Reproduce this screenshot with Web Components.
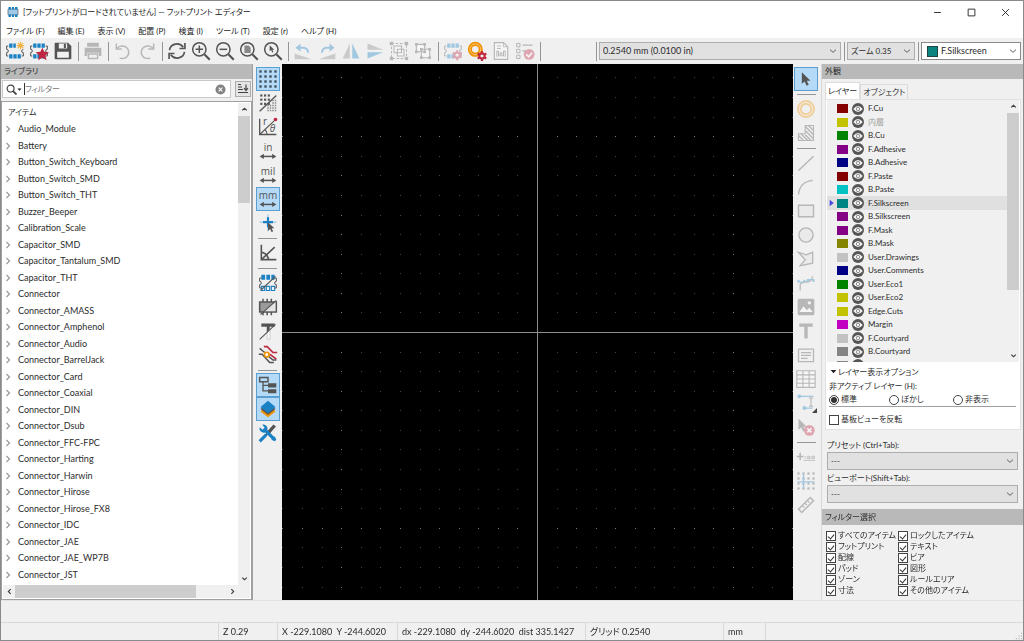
<!DOCTYPE html>
<html lang="ja">
<head>
<meta charset="utf-8">
<title>フットプリント エディター</title>
<style>
html,body{margin:0;height:100%}
body{font:9px/12px Lato,"Noto Sans CJK JP",sans-serif;font-feature-settings:"palt";color:#2c2c2c;background:#f0f0f0;overflow:hidden}
</style>
</head>
<body>
<fp-app></fp-app>
<script>
const G='#545454', B='#1a81c4', R='#bf2641', O='#f29100';
const chip=(top,bot)=>`<g fill="${top}"><path d="M5 3h4v5H5zM10 3h4v5h-4zM15 3h4v5h-4z"/></g><g fill="${bot}"><path d="M5 16h4v5H5zM10 16h4v5h-4zM15 16h4v5h-4z"/></g>`;
const fpBody=`<path d="M4 6H2v4a2 2 0 0 1 0 4v4h2M20 6h2v4a2 2 0 0 0 0 4v4h-2" fill="none" stroke="${G}" stroke-width="1.2"/>`;
const gear=(x,y,c)=>`<g transform="translate(${x} ${y})"><circle r="3.2" fill="#f0f0f0" stroke="${c}" stroke-width="2.6"/><path d="M0-6V-4M0 6V4M-5.2-3L-3.5-2M5.2 3L3.5 2M-5.2 3L-3.5 2M5.2-3L3.5-2" stroke="${c}" stroke-width="2.6"/></g>`;
const mag=inner=>`<circle cx="10" cy="10" r="8" fill="none" stroke="${G}" stroke-width="1.8"/><path d="M16 16l6.500 6.500" stroke="${G}" stroke-width="2.600"/>${inner}`;
const cursor=(x,y,s=1)=>`<path transform="translate(${x} ${y}) scale(${s})" d="M0 0V12L3 9.500 5 14 7.200 13 5.200 8.700H9z" fill="${G}"/>`;
const dots=(xs,ys,r,c)=>xs.map(x=>ys.map(y=>`<rect x="${x-r}" y="${y-r}" width="${2*r}" height="${2*r}" fill="${c}"/>`).join('')).join('');
const arrowsH=`<path d="M5 18.500H19" stroke="${G}" stroke-width="1.800"/><path d="M2 18.500l5-3.200v6.400zM22 18.500l-5-3.200v6.400z" fill="${G}"/>`;
const unit=t=>`<text x="12" y="12" text-anchor="middle" font-size="12" font-family="Open Sans" fill="${G}">${t}</text>${arrowsH}`;
const ICONS={
app:`<rect x="2" y="6" width="20" height="12" rx="1" fill="#9cc9e8" stroke="#666" stroke-width="1.5"/><g fill="${B}"><path d="M3 2h5v5H3zM10 2h4v5h-4zM16 2h5v5h-5zM3 17h5v5H3zM10 17h4v5h-4zM16 17h5v5h-5z"/></g>`,
newfp:chip(B,B)+fpBody+`<rect x="13" y="0" width="11" height="10" fill="#f0f0f0"/><path d="M18.500 1v9M14 5.500h9M15.300 2.300l6.400 6.400M21.700 2.300l-6.400 6.400" stroke="#f2b13c" stroke-width="1.300"/>`,
starfp:chip(B,B)+fpBody+`<path d="M16 8l2.400 5 5.600.6-4.200 3.800 1.200 5.600-5-2.900-5 2.900 1.200-5.600-4.200-3.800 5.600-.6z" fill="${R}"/>`,
save:`<path d="M2 3a1 1 0 0 1 1-1H18l4 4V21a1 1 0 0 1-1 1H3a1 1 0 0 1-1-1z" fill="${G}"/><path d="M7 3H17V9H7zM5 13H19V20H5z" fill="#f0f0f0"/><path d="M13 3.500h2.500v5H13z" fill="${G}"/>`,
print:`<path d="M2 8H22V18H19V14H5V18H2zM5 2H19V7H5z" fill="${G}"/><path d="M6.500 15.500H17.500V21H6.500z" fill="none" stroke="${G}" stroke-width="1.800"/>`,
undo:`<path d="M4 3V9.500H10.500" fill="none" stroke="${G}" stroke-width="1.800"/><path d="M4.500 9A8 7.500 0 1 1 8 20.500" fill="none" stroke="${G}" stroke-width="1.800"/>`,
redo:`<path d="M20 3V9.500H13.500" fill="none" stroke="${G}" stroke-width="1.800"/><path d="M19.500 9A8 7.500 0 1 0 16 20.500" fill="none" stroke="${G}" stroke-width="1.800"/>`,
refresh:`<path d="M3 11A9 8.500 0 0 1 19.500 7.500M21 13A9 8.500 0 0 1 4.500 16.500" fill="none" stroke="${G}" stroke-width="2"/><path d="M21.500 2.500V9H15M2.500 21.500V15H9" fill="none" stroke="${G}" stroke-width="2"/>`,
zin:mag(`<path d="M10 5.500v9M5.500 10h9" stroke="${G}" stroke-width="1.800"/>`),
zout:mag(`<path d="M5.500 10h9" stroke="${G}" stroke-width="1.800"/>`),
zfit:mag(`<path d="M6.500 5.500h5l2.500 2.500v6.500h-7.500z" fill="#888"/>`),
zsel:mag(cursor(8,5,.62)),
rotl:`<path d="M2 15L22 22H2z" fill="#8a8a8a"/><path d="M6 8H13a6 6 0 0 1 5 6" fill="none" stroke="${B}" stroke-width="2.400"/><path d="M3 8l6-5v10z" fill="${B}"/>`,
rotr:`<path d="M22 15L2 22H22z" fill="#8a8a8a"/><path d="M18 8H11a6 6 0 0 0-5 6" fill="none" stroke="${B}" stroke-width="2.400"/><path d="M21 8l-6-5v10z" fill="${B}"/>`,
mirh:`<path d="M10.500 3V21H2z" fill="#8a8a8a"/><path d="M13.500 3V21H22z" fill="${B}"/>`,
mirv:`<path d="M3 3V10.500H22z" fill="#8a8a8a"/><path d="M3 21V13.500H22z" fill="${B}"/>`,
group:`<path d="M3 3H21V21H3z" fill="none" stroke="${G}" stroke-width="1.200" stroke-dasharray="3 2"/>${dots([3,21],[3,21],2,G)}<path d="M6 6H15V14H6zM10 10H18V18H10z" fill="#fff" stroke="${G}" stroke-width="1.300"/>`,
ungroup:`<path d="M4 4H14V13H4zM10 10H20V20H10z" fill="#fff" stroke="${G}" stroke-width="1.300"/>${dots([4,14],[4,13],1.6,G)}${dots([10,20],[10,20],1.6,G)}`,
fpset:chip(B,B)+fpBody+gear(17,17,R),
padset:`<circle cx="10" cy="10" r="6.500" fill="none" stroke="${O}" stroke-width="5"/><circle cx="10" cy="10" r="6.500" fill="none" stroke="#f9c87c" stroke-width="1.200"/>`+gear(18,18,R),
sheet:`<path d="M4 2H15L20 7V22H4z" fill="#fff" stroke="${G}" stroke-width="1.400"/><path d="M15 2V7H20M7 6H12M7 9h5" stroke="${G}" fill="none"/><path d="M7 19V12h2v6h2v-4h2v4h2v-6h2v7" stroke="${G}" fill="none" stroke-width="1.200"/>`,
check:`<path d="M2 3h4v4H2zM2 10h4v4H2zM2 17h4v4H2z" fill="none" stroke="${G}" stroke-width="1.200"/><path d="M9 5H21M9 12h4" stroke="${G}" stroke-width="1.600"/><circle cx="17" cy="16" r="6.500" fill="${R}"/><path d="M13.500 16l3 3 4-5" stroke="#fff" stroke-width="2" fill="none"/>`,
grid:dots([3,9,15,21],[3,9,15,21],1.4,'#3d4d5a'),
gridov:dots([4,8.5,13],[3,8,13],1.3,G)+`<path d="M2 22L22 3" stroke="${G}" stroke-width="1.600"/>`+dots([12,15,18,21],[15,18,21],.9,'#888')+dots([18,21],[9,12],.9,'#888'),
polar:`<path d="M2 2V21H22" fill="none" stroke="${G}" stroke-width="1.600"/><path d="M2 21L20 4M8 15q3 2 3 6" stroke="${G}" stroke-width="1.300" fill="none"/><circle cx="21" cy="3" r="2.200" fill="${R}"/><text x="6" y="10" font-size="12" fill="${G}" font-family="Open Sans">r</text><text x="14" y="18" font-size="12" font-style="italic" fill="${G}" font-family="Open Sans">θ</text>`,
inch:unit('in'),mil:unit('mil'),mm:unit('mm'),
cross:`<path d="M12 2V22M2 11H22" stroke="${B}" stroke-width="1" opacity=".6"/><path d="M12 5V17M6 11H18" stroke="${B}" stroke-width="2.600"/>`+cursor(12,11,.85),
angle:`<path d="M4 2V20H22" fill="none" stroke="${G}" stroke-width="1.900"/><path d="M4 20L20 5M4 11q7 1 9 9" stroke="${G}" stroke-width="1.900" fill="none"/>`,
padsk:`<g fill="${B}"><path d="M4 2h4.500v6H4zM10 2h4.500v6H10zM16 2h4v6h-4z"/></g><path d="M4 16h4v5H4zM10 16h4v5h-4zM16 16h4v5h-4z" stroke="${B}" fill="none" stroke-width="1.300"/>`+fpBody+`<path d="M3 21L21 4" stroke="${G}" stroke-width="1.400"/>`,
chipsk:`<path d="M2 6H22V18H2z" fill="#9a9a9a" stroke="${G}" stroke-width="1.800"/><path d="M6 2v4M11 2v4M16 2v4M6 18v4M11 18v4M16 18v4" stroke="${G}" stroke-width="1.800"/><path d="M21 6V17H6z" fill="#e4e4e4"/><path d="M3 21L22 4" stroke="${G}" stroke-width="1.300"/>`,
textsk:`<path d="M4 3H20V7H14V10L10.500 14V7H4z" fill="${G}"/><path d="M11 14L14.500 11V22H11z" fill="#fafafa" stroke="#bbb" stroke-width=".8"/><path d="M2 22L21 4" stroke="${G}" stroke-width="1.300"/>`,
tracks:`<path d="M7 2h4l7 7h5M14 11l8 6" fill="none" stroke="${R}" stroke-width="2"/><path d="M2 4l6 5M13 14l5 4h4M1 11h4l9 10h5" fill="none" stroke="${G}" stroke-width="1.800"/><circle cx="10.500" cy="11.500" r="2.800" fill="#fff" stroke="${O}" stroke-width="2"/>`,
tree:`<path d="M2 3H12V8H2z" fill="none" stroke="${G}" stroke-width="1.800"/><path d="M6 8V19H13M6 12.500H13" fill="none" stroke="${G}" stroke-width="1.600"/><path d="M12 10H22V15H12zM12 17H22V22H12z" fill="${G}"/>`,
layers:`<path d="M12 8l9 7-9 7-9-7z" fill="${O}"/><path d="M12 5l9 7-9 7-9-7z" fill="${G}"/><path d="M12 2l9 7.500-9 7.500-9-7.500z" fill="${B}"/>`,
tools:`<path d="M3 21L14 10" stroke="${G}" stroke-width="2.200"/><path d="M13 11L20 3" stroke="${G}" stroke-width="4"/><path d="M2 22L10 14" stroke="${B}" stroke-width="3.600"/><path d="M8 8L19 19" stroke="${B}" stroke-width="4"/><path d="M2 5a5 5 0 0 0 7 6l2-2a5 5 0 0 0-6-7l3 3.500-2.500 2.500z" fill="${B}"/><path d="M22 20l-2 2-4-2 4-4z" fill="${B}"/>`,
select:cursor(7,4,1.15),
pad:`<circle cx="12" cy="12" r="8" fill="none" stroke="${O}" stroke-width="5.500"/><circle cx="12" cy="12" r="8" fill="none" stroke="#fcd9a0" stroke-width="1.400"/>`,
zone:`<path d="M11 3H21V21H3V13H11z" fill="none" stroke="${G}" stroke-width="1.300"/><path d="M11 4l10 10M11 9l10 10M11 14l7 7M6 13l8 8M3 15l6 6M15 3l6 6" stroke="${G}" stroke-width="1.700"/>`,
line:`<path d="M3 21L21 4" stroke="${G}" stroke-width="1.700"/>`,
arc:`<path d="M3 21C4 11 10 5 20 4" fill="none" stroke="${G}" stroke-width="1.700"/>`,
rect:`<path d="M3 5H21V19H3z" fill="#ccc" fill-opacity=".4" stroke="${G}" stroke-width="1.700"/>`,
circle:`<circle cx="12" cy="12" r="8.500" fill="#ccc" fill-opacity=".4" stroke="${G}" stroke-width="1.700"/>`,
poly:`<path d="M3 4L12 7 20 4V17L5 20 11 13z" fill="#ccc" fill-opacity=".4" stroke="${G}" stroke-width="1.600"/>`,
bezier:`<path d="M5 21V14C7 8 18 15 20 4" fill="none" stroke="${G}" stroke-width="1.500"/><path d="M2 11H10M13 8h9" stroke="${B}" stroke-width="1.500"/>${dots([3,10,14,21],[9.5],1.2,B)}`,
image:`<rect x="2" y="2" width="20" height="20" rx="2" fill="${G}"/><path d="M4 18l5-7 4 5 3-3 4 5z" fill="#fff"/><circle cx="16" cy="7" r="2" fill="#fff"/>`,
text:`<path d="M4 3H20V7H14V21H10V7H4z" fill="${G}"/>`,
textbox:`<path d="M3 5H21V20H3z" fill="none" stroke="${G}" stroke-width="1.500"/><path d="M6 9H18M6 12.500h12M6 16h8" stroke="${G}" stroke-width="1.500"/>`,
table:`<path d="M1 2H23V22H1zM1 7H23M1 12H23M1 17H23M8.300 2V22M15.700 2V22" fill="#fff" stroke="${G}" stroke-width="1.300"/>`,
dim:`<path d="M3 4H21M10 18H20" stroke="${B}" stroke-width="1.500"/><path d="M18 6V16M15.500 6h5M15.500 16h5" stroke="${G}" stroke-width="1.300"/><circle cx="4" cy="4" r="2.300" fill="${B}"/><circle cx="10" cy="18" r="2.300" fill="${B}"/>`,
del:cursor(3,2,1.1)+`<circle cx="16" cy="16" r="6.500" fill="${R}"/><path d="M13.500 13.500l5 5M18.500 13.500l-5 5" stroke="#fff" stroke-width="2"/>`,
anchor:`<path d="M5 7V16M1 11.500H9" stroke="${G}" stroke-width="1.800"/><path d="M9 16H23M11 14v-3M14 14v-3h2v3h-2M18 14v-3M20 14v-3h2v3h-2" stroke="${G}" fill="none"/>`,
gridorg:dots([3,9,15,21],[3,9,15,21],1.3,G)+`<path d="M9 3V21M2 13H22" stroke="${B}" stroke-width="1.600"/>`,
ruler:`<path d="M3 17L17 3l4 4L7 21z" fill="none" stroke="${G}" stroke-width="1.800"/><path d="M8 13l2 2M11 10l2 2M14 7l2 2" stroke="${G}" stroke-width="1.500"/>`,
up:`<path d="M4 15l8-7 8 7" fill="none" stroke="#404040" stroke-width="4"/>`,
down:`<path d="M4 9l8 7 8-7" fill="none" stroke="#404040" stroke-width="4"/>`,
left:`<path d="M16 4l-8 8 8 8" fill="none" stroke="#404040" stroke-width="4"/>`,
right:`<path d="M8 4l8 8-8 8" fill="none" stroke="#404040" stroke-width="4"/>`,
chev:`<path d="M3 8l9 8 9-8" fill="none" stroke="#555" stroke-width="2.800"/>`,
min:`<path d="M3 12H21" stroke="#222" stroke-width="2.400"/>`,
max:`<path d="M3 3H21V21H3z" fill="none" stroke="#222" stroke-width="2.400"/>`,
close:`<path d="M3 3L21 21M21 3L3 21" stroke="#222" stroke-width="2.400"/>`,
search:`<circle cx="10" cy="10" r="7.500" fill="none" stroke="#444" stroke-width="2.600"/><path d="M15 15l8 8" stroke="#444" stroke-width="4"/>`,
clear:`<circle cx="12" cy="12" r="11" fill="#828282"/><path d="M8 8l8 8M16 8l-8 8" stroke="#fff" stroke-width="2.600"/>`,
sort:`<path d="M2 3h6M2 8h8M2 13h10M2 19H22" stroke="#444" stroke-width="2.400"/><path d="M18 3V14M14 10l4 5 4-5" stroke="#444" stroke-width="2.400" fill="none"/>`,
eye:`<circle cx="12" cy="12" r="12" fill="#555"/><path d="M2.500 12Q12 0 21.500 12 12 24 2.500 12z" fill="#f4f4f4"/><circle cx="12" cy="12" r="3.400" fill="#f4f4f4" stroke="#777" stroke-width="1.600"/>`,
tri:`<path d="M2 7H22L12 18z" fill="#222"/>`,
play:`<path d="M5 2V22L17 12z" fill="#4646e0"/>`,
grip:dots([20],[4],1.6,'#aaa')+dots([12,20],[12],1.6,'#aaa')+dots([4,12,20],[20],1.6,'#aaa')
};
const svg=(n,s,c='')=>`<svg class="${c}" width="${s}" height="${s}" viewBox="0 0 24 24" aria-hidden="true">${ICONS[n]}</svg>`;
const BASE=`*{box-sizing:border-box}svg{display:block;flex:none}button,input,select{font:inherit;color:inherit;font-feature-settings:inherit;margin:0}button{border:0;padding:0;background:none}`;
const define=(tag,css,html,after)=>customElements.define(tag,class extends HTMLElement{
  connectedCallback(){
    if(this.shadowRoot)return;
    const root=this.attachShadow({mode:'open'});
    root.innerHTML=`<style>${BASE}${css}</style>${typeof html==='function'?html(this):html}`;
    if(after)after(this,root);
  }
});

define('fp-tool',`
:host{display:block;flex:none;width:24px;height:24px}
button{width:24px;height:24px;display:grid;place-items:center;border:1px solid transparent;position:relative}
:host([on]) button{background:#b5daf7;border-color:#5a9fcf}
:host([off]) svg{opacity:.36}
i{position:absolute;right:0;bottom:1px;border:solid #444;border-width:0 0 5px 5px;border-left-color:transparent}
`,el=>`<button aria-label="${el.getAttribute('icon')}" ${el.hasAttribute('off')?'disabled':''}>${svg(el.getAttribute('icon'),20)}${el.hasAttribute('more')?'<i></i>':''}</button>`);

define('fp-sep',`
:host{display:grid;place-items:center;flex:none;width:6px;height:24px}
div{width:1px;height:19px;background:#959595}
:host([across]){width:24px;height:6px}
:host([across]) div{width:19px;height:1px}
`,`<div></div>`);

define('fp-tools',`
:host{display:flex}
:host([vertical]){flex-direction:column;align-items:center;padding-top:3px;background:#f0f0f0}
`,el=>el.getAttribute('items').split(' ').map(t=>{
  if(t==='|')return `<fp-sep ${el.hasAttribute('vertical')?'across':''}></fp-sep>`;
  const f=t[0];const n=t.replace(/^[-+*]/,'');
  return `<fp-tool icon="${n}" ${f==='-'||f==='*'?'off':''} ${f==='*'?'more':''} ${f==='+'?'on':''}></fp-tool>`;
}).join(''));

define('fp-combo',`
:host{display:grid;grid-template-columns:auto 1fr auto;align-items:center;height:18px;background:#e1e1e1;border:1px solid #adadad}
:host([light]){background:#fff;border-color:#8a8a8a}
select{grid-area:1/1/2/4;appearance:none;background:none;border:0;height:16px;width:100%;padding:0 16px 0 3px;outline:0}
:host([light]) select{padding-left:19px}
svg{grid-area:1/3;margin-right:3px;pointer-events:none}
::slotted(span){grid-area:1/1;width:11px;height:11px;margin-left:5px;background:#0b847f;border:1px solid #1b4644}
`,el=>`<slot></slot><select aria-label="${el.getAttribute('label')}"><option>${el.getAttribute('value')}</option></select>${svg('chev',8)}`);

define('fp-titlebar',`
:host{display:flex;align-items:center;height:22px;padding:0 13px 0 6px;background:#fff;color:#222;font-size:8px}
h1{font:inherit;margin:0 0 0 4px;flex:1;white-space:nowrap}
button{width:10px;height:16px;margin-left:24px;display:grid;place-items:center}
`,`${svg('app',12)}<h1><slot></slot></h1><button aria-label="最小化">${svg('min',9)}</button><button aria-label="最大化">${svg('max',9)}</button><button aria-label="閉じる">${svg('close',9)}</button>`);

define('fp-menubar',`
:host{display:flex;gap:13px;height:15px;padding:0 5px;background:#fff;color:#222;font-size:8px}
button{height:15px;white-space:nowrap}
`,['ファイル (F)','編集 (E)','表示 (V)','配置 (P)','検査 (I)','ツール (T)','設定 (r)','ヘルプ (H)'].map(t=>`<button>${t}</button>`).join(''));

define('fp-toolbar',`
:host{display:flex;align-items:center;height:26px;padding:0 2px}
.gap{flex:1}
.grid{width:242px}.zoom{width:68px;font-size:8px}.layer{width:100px}
`,`<fp-tools items="newfp starfp save | -print | -undo -redo | refresh zin zout zfit zsel | -rotl -rotr -mirh -mirv -group -ungroup | -fpset padset -sheet -check |"></fp-tools>
<div class="gap"></div><fp-sep></fp-sep>
<fp-combo class="grid" label="グリッド" value="0.2540 mm (0.0100 in)"></fp-combo><fp-sep></fp-sep>
<fp-combo class="zoom" label="ズーム" value="ズーム 0.35"></fp-combo><fp-sep></fp-sep>
<fp-combo class="layer" light label="レイヤー" value="F.Silkscreen"><span></span></fp-combo>`);

define('fp-header',`
:host{display:block;background:#b9b9b9;height:15px;line-height:15px;padding-left:3px;font-size:8px}
h2{font:inherit;line-height:inherit;margin:0}
`,`<h2><slot></slot></h2>`);

define('fp-scroll',`
:host{display:flex;flex-direction:column;align-items:center;width:12px;background:#f0f0f0}
:host([flat]){flex-direction:row;width:auto;height:13px}
button{width:12px;height:13px;display:grid;place-items:center;flex:none}
.track{flex:1;align-self:stretch;display:flex;flex-direction:inherit}
.thumb{background:#cdcdcd;flex:0 0 var(--thumb)}
`,el=>{const h=el.hasAttribute('flat');return `<button aria-label="前へ">${svg(h?'left':'up',7)}</button><div class="track"><div class="thumb"></div></div><button aria-label="次へ">${svg(h?'right':'down',7)}</button>`});

const LIBS='Audio_Module Battery Button_Switch_Keyboard Button_Switch_SMD Button_Switch_THT Buzzer_Beeper Calibration_Scale Capacitor_SMD Capacitor_Tantalum_SMD Capacitor_THT Connector Connector_AMASS Connector_Amphenol Connector_Audio Connector_BarrelJack Connector_Card Connector_Coaxial Connector_DIN Connector_Dsub Connector_FFC-FPC Connector_Harting Connector_Harwin Connector_Hirose Connector_Hirose_FX8 Connector_IDC Connector_JAE Connector_JAE_WP7B Connector_JST'.split(' ');
define('fp-library',`
:host{display:flex;flex-direction:column;border-right:1px solid #a0a0a0;min-height:0}
.find{display:flex;align-items:center;gap:4px;padding:1px 1px 3px 1px}
label{flex:1;display:flex;align-items:center;height:18px;background:#fff;border:1px solid #c8c8c8;padding:0 4px 0 3px}
input{flex:1;min-width:0;border:0;outline:0;padding:0;margin-left:2px;height:12px;background:none;border-left:1px solid #333;font-size:8px}
input::placeholder{color:#777}
.sort{width:16px;height:16px;border:1px solid #adadad;background:#e4e4e4;display:grid;place-items:center}
.box{flex:1;min-height:0;display:grid;grid-template:1fr 13px/1fr 12px;background:#fff;border:1px solid #a0a0a0;padding:1px}
.tree{display:flex;flex-direction:column;min-height:0;padding-bottom:2px}
.head{height:18px;line-height:18px;padding-left:5px;font-size:8px}
ul{list-style:none;margin:0;padding:0;flex:1;display:flex;flex-direction:column;min-height:0}
li{flex:1;display:flex;align-items:center;gap:7px;padding-left:2px;min-height:0;white-space:nowrap}
.v{--thumb:19%}.h{--thumb:86%;grid-column:1}.corner{background:#f0f0f0}
`,`<fp-header>ライブラリ</fp-header>
<div class="find"><label>${svg('search',11)}${svg('tri',5)}<input type="text" aria-label="フィルター" placeholder="フィルター"><button aria-label="消去">${svg('clear',11)}</button></label><button class="sort" aria-label="並べ替え">${svg('sort',12)}</button></div>
<div class="box"><div class="tree"><div class="head">アイテム</div><ul>${LIBS.map(l=>`<li><svg width="6" height="8" viewBox="0 0 6 8"><path d="M1.500 1l3 3-3 3" fill="none" stroke="#999" stroke-width="1.200"/></svg>${l}</li>`).join('')}</ul></div><fp-scroll class="v"></fp-scroll><fp-scroll class="h" flat></fp-scroll><div class="corner"></div></div>`);

define('fp-canvas',`
:host{display:block;background:#000;min-width:0;min-height:0;overflow:hidden}
canvas{display:block;width:100%;height:100%}
`,`<canvas aria-label="作図領域"></canvas>`,(el,root)=>{
  const cv=root.querySelector('canvas');
  const draw=()=>{
    const w=cv.width=el.clientWidth,h=cv.height=el.clientHeight,c=cv.getContext('2d');
    const cx=Math.floor(w/2),cy=Math.floor(h/2),p=19.58;
    for(let i=-Math.ceil(cx/p);i*p<w-cx;i++)for(let j=-Math.ceil(cy/p);j*p<h-cy;j++){
      c.fillStyle=i%10===0||j%10===0?'#777':'#444';
      c.fillRect(Math.round(cx+i*p),Math.round(cy+j*p),1,1);
    }
    c.fillStyle='#8c8c8c';c.fillRect(cx,0,1,h);c.fillRect(0,cy,w,1);
  };
  new ResizeObserver(draw).observe(el);draw();
});

define('fp-layer',`
:host{display:grid;grid-template-columns:5px 11px 12px 1fr;column-gap:4px;align-items:center;height:13px;flex:none;padding-left:1px;overflow:visible}
:host(:nth-child(even)){height:14px}
:host([current]){background:#e0e0e0}
:host([dim]){color:#999}
.mark{width:5px}
.sw{width:11px;height:9px}
.name{white-space:nowrap;line-height:13px}
`,el=>`<span class="mark">${el.hasAttribute('current')?svg('play',8):''}</span><span class="sw" style="background:${el.getAttribute('color')}"></span>${svg('eye',12)}<span class="name"><slot></slot></span>`);

define('fp-option',`
:host{display:block;font-size:8px;line-height:11px}
label{display:flex;align-items:center;gap:2px;white-space:nowrap}
input{appearance:none;width:10px;height:10px;border:1px solid #444;background:#fff;flex:none;display:grid;place-items:center}
input[type=radio]{border-radius:50%}
input[type=radio]:checked::before{content:"";width:6px;height:6px;border-radius:50%;background:#333}
input[type=checkbox]:checked::before{content:"";width:3px;height:5px;border:solid #333;border-width:0 1px 1px 0;transform:rotate(40deg)}
`,el=>`<label><input type="${el.getAttribute('type')||'checkbox'}" name="o" ${el.hasAttribute('checked')?'checked':''}><slot></slot></label>`);

const LAYERS=[['F.Cu','#840000'],['内層','#c2c200'],['B.Cu','#008400'],['F.Adhesive','#840084'],['B.Adhesive','#000084'],['F.Paste','#840000'],['B.Paste','#00c2c2'],['F.Silkscreen','#008484'],['B.Silkscreen','#840084'],['F.Mask','#840084'],['B.Mask','#848400'],['User.Drawings','#c2c2c2'],['User.Comments','#000084'],['User.Eco1','#008400'],['User.Eco2','#c2c200'],['Edge.Cuts','#c2c200'],['Margin','#c200c2'],['F.Courtyard','#c2c2c2'],['B.Courtyard','#848484'],['F.Fab','#848484']];
define('fp-appearance',`
:host{display:flex;flex-direction:column;border-left:1px solid #d8d8d8;min-height:0;font-size:8px}
.tabs{display:flex;align-items:flex-end;height:20px;padding-left:3px}
.tabs button{height:15px;padding:0 2px;border:1px solid #dcdcdc;border-bottom:0}
.tabs button:first-child{height:17px;background:#fff}
.page{margin:0 2px 0 3px;flex:1;min-height:0;display:flex;flex-direction:column;background:#fff;border:1px solid #e2e2e2}
.list{flex:1;min-height:0;display:grid;grid-template-columns:1fr 12px;margin:0 1px;background:#f0f0f0;overflow:hidden}
.rows{padding-top:2px;min-height:0;overflow:hidden;display:flex;flex-direction:column}
fp-scroll{--thumb:75%}
.opts{flex:none;padding:3px 4px 4px 3px}
.fold{display:flex;align-items:center;gap:1px;height:13px;padding-left:1px}
fieldset{border:0;border-bottom:1px solid #a0a0a0;margin:2px 0 7px;padding:0;min-width:0}
legend{padding:0;line-height:13px}
.radios{display:grid;grid-template-columns:60px 64px 1fr;padding:1px 0}
.sets{padding:8px 5px 0;flex:none}
.sets div{line-height:14px}
.sets fp-combo{margin-bottom:1px}
.sets fp-combo:last-child{margin-bottom:6px}
fp-header.f{height:16px;line-height:16px}
.filter{display:grid;grid-template-columns:72px 1fr;padding:5px 0 4px 4px}
`,`<fp-header>外観</fp-header>
<div class="tabs"><button>レイヤー</button><button>オブジェクト</button></div>
<div class="page"><div class="list"><div class="rows">${LAYERS.map(([n,c],i)=>`<fp-layer color="${c}" ${i===7?'current':''} ${i===1?'dim':''}>${n}</fp-layer>`).join('')}</div><fp-scroll></fp-scroll></div>
<div class="opts"><div class="fold">${svg('tri',7)}<span>レイヤー表示オプション</span></div>
<fieldset><legend>非アクティブ レイヤー (H):</legend><div class="radios"><fp-option type="radio" checked>標準</fp-option><fp-option type="radio">ぼかし</fp-option><fp-option type="radio">非表示</fp-option></div></fieldset>
<fp-option>基板ビューを反転</fp-option></div></div>
<div class="sets"><div>プリセット (Ctrl+Tab):</div><fp-combo label="プリセット" value="---"></fp-combo><div>ビューポート(Shift+Tab):</div><fp-combo label="ビューポート" value="---"></fp-combo></div>
<fp-header class="f">フィルター選択</fp-header>
<div class="filter">${['すべてのアイテム','ロックしたアイテム','フットプリント','テキスト','配線','ビア','パッド','図形','ゾーン','ルールエリア','寸法','その他のアイテム'].map(t=>`<fp-option checked>${t}</fp-option>`).join('')}</div>`);

define('fp-status',`
:host{display:grid;grid-template-columns:218px 59px 120px 188px 138px 42px 1fr auto;height:18px;line-height:17px;border-top:1px solid #d9d9d9;white-space:pre}
span{padding-left:4px;border-right:1px solid #d9d9d9}
span:nth-of-type(7){border:0}
svg{align-self:end}
`,`<span></span><span>Z 0.29</span><span>X -229.1080  Y -244.6020</span><span>dx -229.1080  dy -244.6020  dist 335.1427</span><span>グリッド 0.2540</span><span>mm</span><span></span>${svg('grip',8)}`);

define('fp-app',`
:host{display:flex;flex-direction:column;height:100vh;border:1px solid #8a8a8a;box-sizing:border-box}
main{flex:1;min-height:0;display:grid;grid-template-columns:252px 29px minmax(0,1fr) 28px 202px;grid-template-rows:minmax(0,1fr)}
.bottom{height:22px;flex:none;border-top:1px solid #e2e2e2}
.draw{padding-right:2px}
fp-titlebar,fp-menubar,fp-toolbar,fp-status{flex:none}
`,`<fp-titlebar>[フットプリントがロードされていません] — フットプリント エディター</fp-titlebar>
<fp-menubar></fp-menubar><fp-toolbar></fp-toolbar>
<main><fp-library></fp-library>
<fp-tools vertical items="+grid gridov polar inch mil +mm cross | angle | padsk chipsk textsk tracks | +tree +layers tools"></fp-tools>
<fp-canvas></fp-canvas>
<fp-tools class="draw" vertical items="+select | -pad -zone | -line -arc -rect -circle -poly -bezier -image -text -textbox -table *dim -del | -anchor -gridorg -ruler"></fp-tools>
<fp-appearance></fp-appearance></main>
<div class="bottom"></div><fp-status></fp-status>`);
</script>
</body>
</html>
